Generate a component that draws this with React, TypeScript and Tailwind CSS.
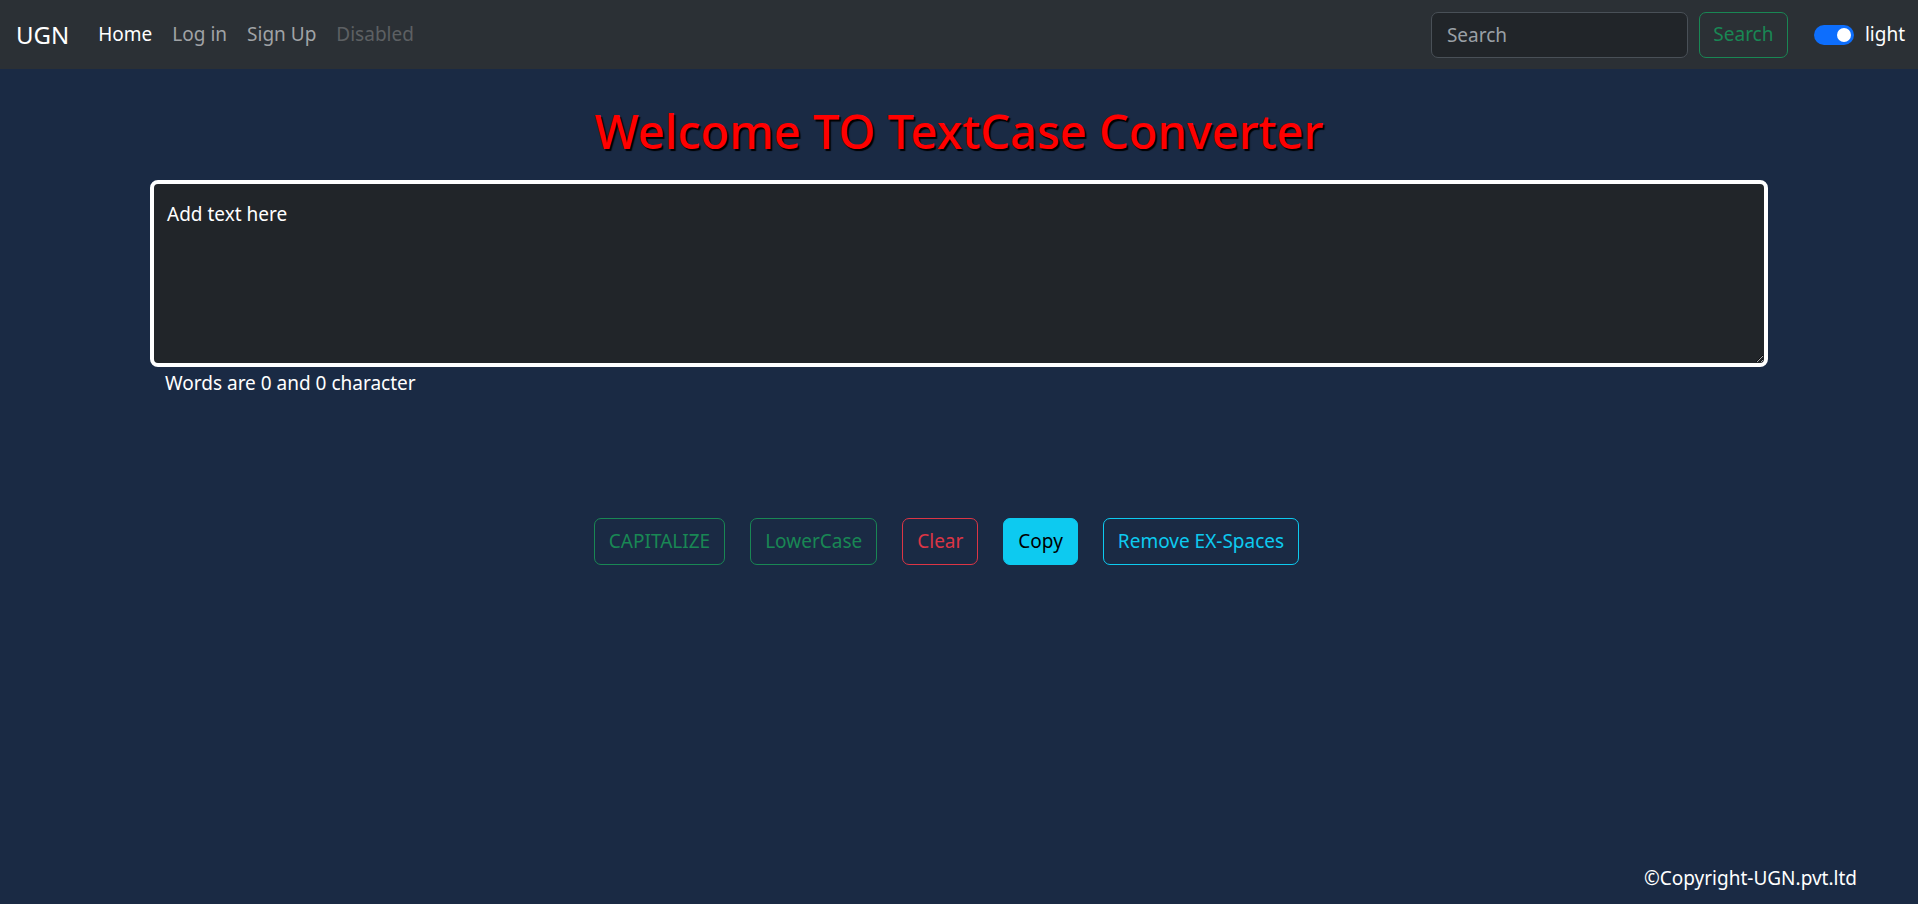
import React, { useState } from 'react';

const font = { fontFamily: '"Noto Sans", "Open Sans", sans-serif' };

function Navbar() {
  return (
    <nav className="h-[69px] bg-[#2b3035] flex items-center pl-[16px] pr-[13px]">
      <a href="#" className="text-[24px] text-white mr-[19px] leading-none">UGN</a>
      <ul className="flex items-center text-[19px]">
        <li><a href="#" className="px-[10px] text-white">Home</a></li>
        <li><a href="#" className="px-[10px] text-[#a0a3a6]">Log in</a></li>
        <li><a href="#" className="px-[10px] text-[#a0a3a6]">Sign Up</a></li>
        <li><span className="px-[10px] text-[#5d6063]">Disabled</span></li>
      </ul>
      <div className="ml-auto flex items-center">
        <input
          type="search"
          placeholder="Search"
          className="w-[257px] h-[46px] rounded-[7px] border border-[#495057] bg-[#212529] px-[15px] text-[19px] text-white placeholder:text-[#9aa0a6] outline-none"
        />
        <button className="ml-[11px] w-[89px] h-[46px] rounded-[7px] border border-[#198754] text-[#198754] text-[19px]">
          Search
        </button>
        <div className="ml-[26px] w-[40px] h-[20px] rounded-full bg-[#0d6efd] flex items-center justify-end pr-[3px]">
          <div className="w-[14px] h-[14px] rounded-full bg-white" />
        </div>
        <span className="ml-[11px] text-[19px] text-white">light</span>
      </div>
    </nav>
  );
}

export default function App() {
  const [text, setText] = useState('');
  const words = text.split(/\s+/).filter(w => w.length > 0).length;

  const buttons = [
    { label: 'CAPITALIZE', cls: 'border-[#198754] text-[#198754]', action: () => setText(text.toUpperCase()) },
    { label: 'LowerCase', cls: 'border-[#198754] text-[#198754]', action: () => setText(text.toLowerCase()) },
    { label: 'Clear', cls: 'border-[#dc3545] text-[#dc3545]', action: () => setText('') },
    { label: 'Copy', cls: 'border-[#0dcaf0] bg-[#0dcaf0] text-black', action: () => navigator.clipboard?.writeText(text) },
    { label: 'Remove EX-Spaces', cls: 'border-[#0dcaf0] text-[#0dcaf0]', action: () => setText(text.split(/[ ]+/).join(' ')) },
  ];

  return (
    <div className="h-[904px] bg-[#1a2a44] flex flex-col text-white overflow-hidden" style={font}>
      <Navbar />
      <main className="flex-1 flex flex-col">
        <h1 className="text-center text-[47px] font-medium text-[#ff0000] mt-[32px] leading-[60px] [text-shadow:2px_2px_1px_#000]">
          Welcome TO TextCase Converter
        </h1>
        <div className="mx-[150px] mt-[19px]">
          <textarea
            value={text}
            onChange={e => setText(e.target.value)}
            placeholder="Add text here"
            className="block w-full h-[187px] rounded-[8px] border-4 border-white bg-[#212529] px-[13px] pt-[16px] text-[19px] text-white placeholder:text-white outline-none"
          />
          <p className="pl-[15px] text-[19px] mt-[2px]">
            Words are {words} and {text.length} character
          </p>
        </div>
        <div className="flex justify-center mt-[120px]">
          {buttons.map(b => (
            <button
              key={b.label}
              onClick={b.action}
              className={`mr-[25px] h-[47px] px-[14px] rounded-[7px] border text-[19px] ${b.cls}`}
            >
              {b.label}
            </button>
          ))}
        </div>
        <footer className="mt-auto flex justify-end pr-[61px] pb-[12px] text-[19px]">
          ©Copyright-UGN.pvt.ltd
        </footer>
      </main>
    </div>
  );
}
